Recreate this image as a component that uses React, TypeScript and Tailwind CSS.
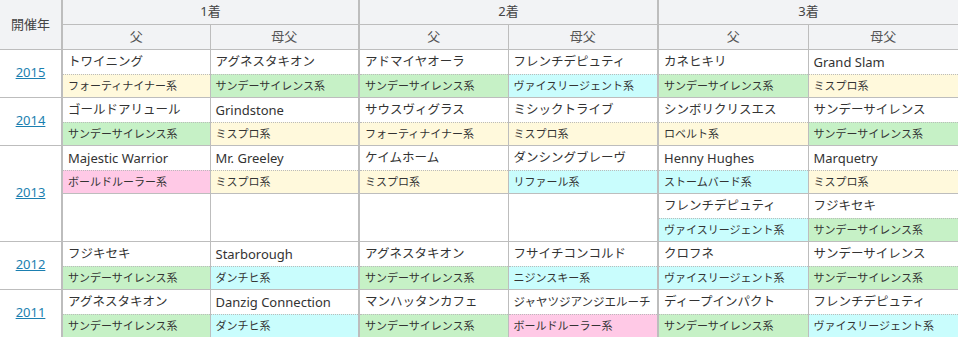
import React from 'react';

type Horse = { name: string; line: string; tone: 'y' | 'g' | 'c' | 'p' } | null;

const toneBg: Record<string, string> = {
  y: 'bg-[#fff9dc]',
  g: 'bg-[#c6f1c6]',
  c: 'bg-[#c9fdfd]',
  p: 'bg-[#ffc9e6]',
};

const H = (name: string, line: string, tone: 'y' | 'g' | 'c' | 'p'): Horse => ({ name, line, tone });

const rows: { year?: string; span?: number; horses: Horse[] }[] = [
  {
    year: '2015',
    horses: [
      H('トワイニング', 'フォーティナイナー系', 'y'),
      H('アグネスタキオン', 'サンデーサイレンス系', 'g'),
      H('アドマイヤオーラ', 'サンデーサイレンス系', 'g'),
      H('フレンチデピュティ', 'ヴァイスリージェント系', 'c'),
      H('カネヒキリ', 'サンデーサイレンス系', 'g'),
      H('Grand Slam', 'ミスプロ系', 'y'),
    ],
  },
  {
    year: '2014',
    horses: [
      H('ゴールドアリュール', 'サンデーサイレンス系', 'g'),
      H('Grindstone', 'ミスプロ系', 'y'),
      H('サウスヴィグラス', 'フォーティナイナー系', 'y'),
      H('ミシックトライブ', 'ミスプロ系', 'y'),
      H('シンボリクリスエス', 'ロベルト系', 'y'),
      H('サンデーサイレンス', 'サンデーサイレンス系', 'g'),
    ],
  },
  {
    year: '2013',
    span: 2,
    horses: [
      H('Majestic Warrior', 'ボールドルーラー系', 'p'),
      H('Mr. Greeley', 'ミスプロ系', 'y'),
      H('ケイムホーム', 'ミスプロ系', 'y'),
      H('ダンシングブレーヴ', 'リファール系', 'c'),
      H('Henny Hughes', 'ストームバード系', 'c'),
      H('Marquetry', 'ミスプロ系', 'y'),
    ],
  },
  {
    horses: [
      null,
      null,
      null,
      null,
      H('フレンチデピュティ', 'ヴァイスリージェント系', 'c'),
      H('フジキセキ', 'サンデーサイレンス系', 'g'),
    ],
  },
  {
    year: '2012',
    horses: [
      H('フジキセキ', 'サンデーサイレンス系', 'g'),
      H('Starborough', 'ダンチヒ系', 'c'),
      H('アグネスタキオン', 'サンデーサイレンス系', 'g'),
      H('フサイチコンコルド', 'ニジンスキー系', 'c'),
      H('クロフネ', 'ヴァイスリージェント系', 'c'),
      H('サンデーサイレンス', 'サンデーサイレンス系', 'g'),
    ],
  },
  {
    year: '2011',
    horses: [
      H('アグネスタキオン', 'サンデーサイレンス系', 'g'),
      H('Danzig Connection', 'ダンチヒ系', 'c'),
      H('マンハッタンカフェ', 'サンデーサイレンス系', 'g'),
      H('ジャヤツジアンジエルーチ', 'ボールドルーラー系', 'p'),
      H('ディープインパクト', 'サンデーサイレンス系', 'g'),
      H('フレンチデピュティ', 'ヴァイスリージェント系', 'c'),
    ],
  },
];

const font = { fontFamily: '"Noto Sans", "Noto Sans CJK JP", sans-serif' };

// long katakana names get a slightly smaller size so they stay inside the cell
const nameSize = (name: string) => {
  if (/^[\x00-\x7f]+$/.test(name)) return 'text-[13px]';
  return name.length > 11 ? 'text-[11.5px]' : 'text-[12.5px]';
};

export default function App() {
  return (
    <div className="w-[958px] h-[337px] overflow-hidden bg-white text-[12px] text-[#333]" style={font}>
      <table className="w-[958px] table-fixed border-collapse">
        <colgroup>
          <col className="w-[62px]" />
          <col className="w-[148px]" />
          <col className="w-[149px]" />
          <col className="w-[149px]" />
          <col className="w-[150px]" />
          <col className="w-[150px]" />
          <col className="w-[150px]" />
        </colgroup>
        <thead>
          <tr className="bg-[#f2f3f5] text-[#444] text-[13px]">
            <th rowSpan={2} className="border-r-2 border-b border-[#bdbdbd] font-normal text-center">
              開催年
            </th>
            {['1着', '2着', '3着'].map((t, i) => (
              <th
                key={t}
                colSpan={2}
                className={`h-6 p-0 font-normal text-center border-b border-[#bdbdbd] ${i > 0 ? 'border-l-2' : ''}`}
              >
                {t}
              </th>
            ))}
          </tr>
          <tr className="bg-[#f2f3f5] text-[#555] text-[13px]">
            {[0, 1, 2, 3, 4, 5].map((i) => (
              <th
                key={i}
                className={`h-[25px] p-0 font-normal text-center border-b border-[#bdbdbd] ${
                  i === 2 || i === 4 ? 'border-l-2' : 'border-l'
                }`}
              >
                {i % 2 === 0 ? '父' : '母父'}
              </th>
            ))}
          </tr>
        </thead>
        <tbody>
          {rows.map((r, ri) => (
            <tr key={ri}>
              {r.year && (
                <td rowSpan={r.span ?? 1} className="p-0 text-center align-middle border-r-2 border-b border-[#bdbdbd] text-[13px]">
                  <a href="#" className="text-[#1b7fb0] underline">
                    {r.year}
                  </a>
                </td>
              )}
              {r.horses.map((h, i) => (
                <td
                  key={i}
                  className={`p-0 align-top border-b border-[#bdbdbd] ${i === 2 || i === 4 ? 'border-l-2' : 'border-l'}`}
                >
                  {h ? (
                    <>
                      <div className={`h-6 leading-6 px-[5px] whitespace-nowrap overflow-hidden ${nameSize(h.name)}`}>
                        {h.name}
                      </div>
                      <div
                        className={`h-[23px] leading-[22px] px-[5px] text-[11px] border-t border-dotted border-[#bbb] whitespace-nowrap overflow-hidden ${toneBg[h.tone]}`}
                      >
                        {h.line}
                      </div>
                    </>
                  ) : (
                    <div className="h-[47px]" />
                  )}
                </td>
              ))}
            </tr>
          ))}
        </tbody>
      </table>
    </div>
  );
}
